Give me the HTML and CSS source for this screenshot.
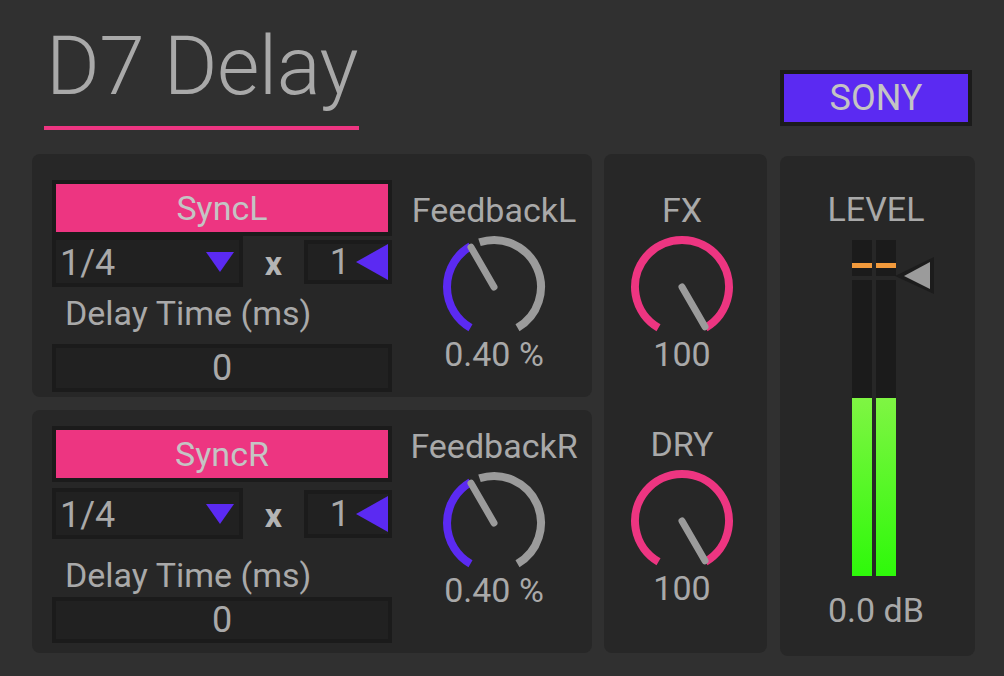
FILE: index.html
```html
<!DOCTYPE html>
<html lang="en">
<head>
<meta charset="utf-8">
<title>D7 Delay</title>
<link rel="stylesheet" href="styles.css">
</head>
<body>
<div class="app">
  <header class="top">
    <div class="title-wrap">
      <h1 class="title">D7 Delay</h1>
      <div class="title-line"></div>
    </div>
    <div class="brand">SONY</div>
  </header>

  <main class="rack">
    <div class="col-left">
      <section class="panel sync-panel p1">
        <div class="sync-controls">
          <div class="sync-btn">SyncL</div>
          <div class="sync-row">
            <div class="dropdown"><span class="dd-text">1/4</span><svg class="tri-down" viewBox="0 0 28 20" width="28" height="20"><polygon points="0,0 28,0 14,20"/></svg></div>
            <div class="mult">x</div>
            <div class="num-box"><span class="num-text">1</span><svg class="tri-left" viewBox="0 0 32 36" width="32" height="36"><polygon points="0,18 32,0 32,36"/></svg></div>
          </div>
          <div class="dt-label">Delay Time (ms)</div>
          <div class="dt-box">0</div>
        </div>
        <div class="dial-block">
          <div class="dial-label">FeedbackL</div>
          <svg class="knob" viewBox="0 0 110 102" width="110" height="102">
            <path class="arc-on" d="M31.5 95.7 A47 47 0 0 1 31.5 14.3"/>
            <path class="arc-off" d="M40.48 10.3 A47 47 0 0 1 78.5 95.7"/>
            <line class="needle" x1="55" y1="55" x2="32" y2="15.2"/>
          </svg>
          <div class="dial-value">0.40 %</div>
        </div>
      </section>

      <section class="panel sync-panel p2">
        <div class="sync-controls">
          <div class="sync-btn">SyncR</div>
          <div class="sync-row">
            <div class="dropdown"><span class="dd-text">1/4</span><svg class="tri-down" viewBox="0 0 28 20" width="28" height="20"><polygon points="0,0 28,0 14,20"/></svg></div>
            <div class="mult">x</div>
            <div class="num-box"><span class="num-text">1</span><svg class="tri-left" viewBox="0 0 32 36" width="32" height="36"><polygon points="0,18 32,0 32,36"/></svg></div>
          </div>
          <div class="dt-label">Delay Time (ms)</div>
          <div class="dt-box">0</div>
        </div>
        <div class="dial-block">
          <div class="dial-label">FeedbackR</div>
          <svg class="knob" viewBox="0 0 110 102" width="110" height="102">
            <path class="arc-on" d="M31.5 95.7 A47 47 0 0 1 31.5 14.3"/>
            <path class="arc-off" d="M40.48 10.3 A47 47 0 0 1 78.5 95.7"/>
            <line class="needle" x1="55" y1="55" x2="32" y2="15.2"/>
          </svg>
          <div class="dial-value">0.40 %</div>
        </div>
      </section>
    </div>

    <section class="panel mix-panel">
      <div class="dial-block">
        <div class="dial-label">FX</div>
        <svg class="knob" viewBox="0 0 110 102" width="110" height="102">
          <path class="arc-pink" d="M31.5 95.7 A47 47 0 1 1 78.5 95.7"/>
          <line class="needle" x1="55" y1="55" x2="78" y2="94.8"/>
        </svg>
        <div class="dial-value">100</div>
      </div>
      <div class="dial-block dry">
        <div class="dial-label">DRY</div>
        <svg class="knob" viewBox="0 0 110 102" width="110" height="102">
          <path class="arc-pink" d="M31.5 95.7 A47 47 0 1 1 78.5 95.7"/>
          <line class="needle" x1="55" y1="55" x2="78" y2="94.8"/>
        </svg>
        <div class="dial-value">100</div>
      </div>
    </section>

    <section class="panel level-panel">
      <div class="dial-label">LEVEL</div>
      <div class="meter">
        <div class="bar"><span class="peak"></span><span class="fill" style="height:178px"></span></div>
        <div class="bar"><span class="peak"></span><span class="fill" style="height:178px"></span></div>
        <svg class="meter-thumb" viewBox="0 0 39 37" width="39" height="37">
          <polygon class="thumb-edge" points="0,19 39,0 39,37"/>
          <polygon class="thumb-face" points="9,19 35,5 35,32"/>
        </svg>
      </div>
      <div class="level-value">0.0 dB</div>
    </section>
  </main>
</div>
</body>
</html>
```

FILE: styles.css
```css
* { box-sizing: border-box; }

html, body {
  margin: 0;
  padding: 0;
  background: #303030;
}

body {
  width: 1004px;
  height: 676px;
  overflow: hidden;
  font-family: "Roboto", "Liberation Sans", sans-serif;
  color: #a9a9a9;
}

.app {
  width: 1004px;
  height: 676px;
}

/* ---------- header ---------- */
.top {
  display: flex;
  justify-content: space-between;
  align-items: flex-start;
  height: 154px;
  padding: 0 32px 0 44px;
}

.title-wrap {
  width: 315px;
  padding-top: 25px;
}

.title {
  margin: 0;
  padding-left: 2px;
  font-size: 82px;
  line-height: 82px;
  font-weight: 300;
  letter-spacing: -0.5px;
  color: #a9a9a9;
  white-space: nowrap;
}

.title-line {
  height: 4px;
  margin-top: 19px;
  background: #ed3581;
}

.brand {
  margin-top: 70px;
  width: 192px;
  height: 56px;
  border: 4px solid #1b1b1b;
  background: #5b2af2;
  color: #c4c4c4;
  font-size: 36px;
  line-height: 48px;
  text-align: center;
}

/* ---------- rack ---------- */
.rack {
  display: flex;
  gap: 12px;
  padding-left: 32px;
  height: 499px;
}

.panel {
  background: #272727;
  border-radius: 8px;
}

.col-left {
  display: flex;
  flex-direction: column;
  gap: 13px;
  width: 560px;
}

.sync-panel {
  display: flex;
  gap: 12px;
  height: 243px;
  padding: 26px 8px 0 20px;
}
.sync-panel.p2 { padding-top: 16px; }

.sync-controls {
  display: flex;
  flex-direction: column;
  width: 340px;
}

.sync-btn {
  height: 56px;
  border: 4px solid #1b1b1b;
  background: #ed3581;
  color: #c4c4c4;
  font-size: 34px;
  line-height: 48px;
  text-align: center;
}

.sync-row {
  display: flex;
  align-items: center;
  height: 51px;
}
.p2 .sync-row { margin-top: 6px; }

.dropdown {
  display: flex;
  align-items: center;
  justify-content: space-between;
  width: 191px;
  height: 51px;
  border: 4px solid #1b1b1b;
  background: #212121;
  padding: 0 5px 0 4px;
}

.dd-text {
  font-size: 36px;
  line-height: 43px;
  padding-top: 3px;
  color: #a9a9a9;
}

.tri-down polygon,
.tri-left polygon { fill: #5b2af2; }

.mult {
  width: 61px;
  text-align: center;
  font-size: 34px;
  font-weight: 700;
  color: #b4b4b4;
  line-height: 40px;
  padding-top: 2px;
  padding-right: 4px;
  padding-left: 4px;
}

.num-box {
  display: flex;
  align-items: center;
  justify-content: flex-end;
  gap: 6px;
  width: 88px;
  height: 44px;
  border: 4px solid #1b1b1b;
  background: #212121;
}
.p2 .num-box { height: 48px; }

.num-text {
  font-size: 36px;
  line-height: 36px;
}

.dt-label {
  margin-top: 6px;
  padding-left: 13px;
  font-size: 34px;
  line-height: 40px;
  white-space: nowrap;
}
.p2 .dt-label { margin-top: 16px; }

.dt-box {
  margin-top: 11px;
  height: 48px;
  border: 4px solid #1b1b1b;
  background: #212121;
  font-size: 36px;
  line-height: 40px;
  text-align: center;
}
.p2 .dt-box { margin-top: 2px; height: 46px; line-height: 38px; }

/* ---------- dials ---------- */
.dial-block {
  display: flex;
  flex-direction: column;
  align-items: center;
  width: 180px;
}
.p1 .dial-block { margin-top: 10px; }

.dial-label {
  font-size: 34px;
  line-height: 40px;
  white-space: nowrap;
  text-align: center;
}

.knob {
  display: block;
  margin-top: 2px;
  fill: none;
}

.arc-on { stroke: #5b2af2; stroke-width: 8; fill: none; }
.arc-off { stroke: #9b9b9b; stroke-width: 8; fill: none; }
.arc-pink { stroke: #ed3581; stroke-width: 8; fill: none; }
.needle { stroke: #9b9b9b; stroke-width: 7; stroke-linecap: round; }

.dial-value {
  font-size: 34px;
  line-height: 40px;
  white-space: nowrap;
}

.mix-panel {
  display: flex;
  flex-direction: column;
  align-items: center;
  width: 163px;
  height: 499px;
  padding: 36px 7px 0 0;
}
.mix-panel .dial-block { width: 156px; }
.mix-panel .dry { margin-top: 50px; }

/* ---------- level ---------- */
.level-panel {
  display: flex;
  flex-direction: column;
  align-items: center;
  width: 195px;
  height: 500px;
  margin-top: 2px;
  margin-left: 1px;
  padding: 33px 3px 0 0;
}

.meter {
  position: relative;
  display: flex;
  gap: 4px;
  align-self: flex-start;
  margin-left: 72px;
  margin-top: 11px;
  height: 336px;
}

.bar {
  position: relative;
  width: 20px;
  height: 336px;
  background: #1b1b1b;
  overflow: hidden;
}

.bar::after {
  content: "";
  position: absolute;
  left: 0;
  right: 0;
  top: 36px;
  height: 4px;
  background: #272727;
}

.peak {
  position: absolute;
  left: 0;
  right: 0;
  top: 23px;
  height: 5px;
  background: #f29a3c;
}

.fill {
  position: absolute;
  left: 0;
  right: 0;
  bottom: 0;
  background: linear-gradient(to bottom, #7ff543, #2ef90a);
}

.meter-thumb {
  position: absolute;
  left: 43px;
  top: 17px;
}
.thumb-edge { fill: #1c1c1c; }
.thumb-face { fill: #9b9b9b; }

.level-value {
  margin-top: 14px;
  font-size: 34px;
  line-height: 40px;
}
```
